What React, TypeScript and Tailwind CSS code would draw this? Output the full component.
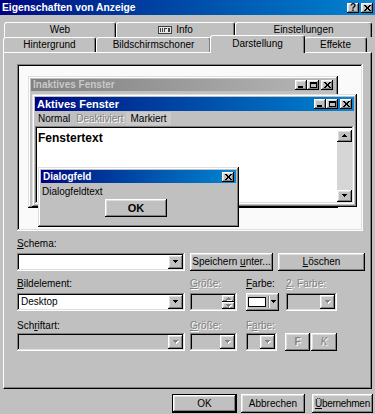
import React from 'react';

// classic 3D edges
const raised = 'shadow-[inset_-1px_-1px_#000000,inset_1px_1px_#ffffff,inset_-2px_-2px_#808080,inset_2px_2px_#dfdfdf]';
const sunken = 'shadow-[inset_-1px_-1px_#ffffff,inset_1px_1px_#808080,inset_-2px_-2px_#dfdfdf,inset_2px_2px_#000000]';
const frame = 'shadow-[inset_-1px_-1px_#000000,inset_1px_1px_#dfdfdf,inset_-2px_-2px_#808080,inset_2px_2px_#ffffff]';
const dim = 'text-[#808080] [text-shadow:1px_1px_0_#ffffff]';

const Tri: React.FC<{ up?: boolean; off?: boolean }> = ({ up, off }) => {
  const rows = up ? [1, 3, 5] : [5, 3, 1];
  return (
    <svg width="6" height="4" viewBox="0 0 6 4" shapeRendering="crispEdges">
      {off && rows.map((w, i) => <rect key={'s' + i} x={(5 - w) / 2 + 1} y={i + 1} width={w} height={1} fill="#ffffff" />)}
      {rows.map((w, i) => <rect key={i} x={(5 - w) / 2} y={i} width={w} height={1} fill={off ? '#808080' : '#000000'} />)}
    </svg>
  );
};

const Cap: React.FC<{ kind: 'min' | 'max' | 'close' | 'help' }> = ({ kind }) => (
  <div className={`w-[12px] h-[10px] bg-[#c0c0c0] ${raised} flex items-center justify-center`}>
    {kind === 'min' && <div className="w-[5px] h-[2px] bg-black mt-[4px] -ml-[1px]" />}
    {kind === 'max' && <div className="w-[7px] h-[6px] border border-black border-t-2" />}
    {kind === 'close' && (
      <svg width="7" height="6" viewBox="0 0 7 6" shapeRendering="crispEdges">
        <path d="M0 0h2l1.5 2 1.5-2h2L4.5 3 7 6H5L3.5 4 2 6H0l2.5-3z" fill="#000" />
      </svg>
    )}
    {kind === 'help' && <span className="text-[10px] font-bold leading-none">?</span>}
  </div>
);

const Btn: React.FC<{ className: string; children?: React.ReactNode }> = ({ className, children }) => (
  <div className={`${className} ${raised} bg-[#c0c0c0] flex items-center justify-center`}>{children}</div>
);

const Combo: React.FC<{ className: string; value?: string; off?: boolean }> = ({ className, value, off }) => (
  <div className={`${className} h-[18px] p-[2px] flex ${sunken} ${off ? 'bg-[#c0c0c0]' : 'bg-white'}`}>
    <div className="flex-1 flex items-center pl-[2px] overflow-hidden">{value}</div>
    <div className={`w-[15px] h-full ${raised} bg-[#c0c0c0] flex items-center justify-center`}>
      <Tri off={off} />
    </div>
  </div>
);

const Tab: React.FC<{ className: string; children: React.ReactNode }> = ({ className, children }) => (
  <div className={`${className} h-[15px] flex items-center justify-center gap-[4px] border-t border-l border-r border-t-white border-l-white border-r-black rounded-t-[3px] shadow-[inset_-1px_0_#808080]`}>
    {children}
  </div>
);

const InfoIcon = () => (
  <svg width="14" height="8" viewBox="0 0 14 8" shapeRendering="crispEdges">
    <rect x="0.5" y="0.5" width="13" height="7" fill="#e8e8e8" stroke="#404040" />
    <rect x="2" y="2" width="1" height="4" fill="#404040" />
    <rect x="4" y="2" width="1" height="4" fill="#404040" />
    <rect x="6" y="2" width="3" height="1" fill="#404040" />
    <rect x="6" y="3" width="1" height="3" fill="#404040" />
    <rect x="10" y="2" width="2" height="4" fill="#404040" />
  </svg>
);

const App: React.FC = () => {
  return (
    <div className="w-[375px] h-[414px] overflow-hidden bg-[#c0c0c0] text-black text-[10px] leading-[12px] font-['Liberation_Sans',Arial,sans-serif]">
      {/* title bar */}
      <div className="h-[15px] flex items-center pl-[2px] pr-[2px] bg-linear-to-r from-[#000080] to-[#1084d0]">
        <span className="text-white font-bold text-[10.3px]">Eigenschaften von Anzeige</span>
        <div className="ml-auto flex gap-[2px]">
          <Cap kind="help" />
          <Cap kind="close" />
        </div>
      </div>

      {/* tabs */}
      <div className="mt-[7px] ml-[4px] flex">
        <Tab className="w-[112px]">Web</Tab>
        <Tab className="w-[119px]"><InfoIcon /><span>Info</span></Tab>
        <Tab className="w-[137px]">Einstellungen</Tab>
      </div>
      <div className="ml-[3px] h-[15px] flex items-end">
        <Tab className="w-[93px]">Hintergrund</Tab>
        <Tab className="w-[115px]">Bildschirmschoner</Tab>
        <div className="relative z-10 -mx-[1px] -mb-[1px] w-[95px] h-[18px] pt-[2px] bg-[#c0c0c0] flex justify-center border-t border-l border-r border-t-white border-l-white border-r-black rounded-t-[3px] shadow-[inset_-1px_0_#808080]">
          Darstellung
        </div>
        <Tab className="w-[63px]">Effekte</Tab>
      </div>

      {/* panel */}
      <div className="ml-[3px] w-[369px] h-[337px] border border-t-white border-l-white border-r-black border-b-black shadow-[inset_-1px_-1px_#808080] pt-[11px] pl-[13px]">
        {/* preview */}
        <div className={`relative w-[346px] h-[167px] bg-[#fafafa] ${sunken}`}>
          <div className={`absolute left-[11px] top-[12px] w-[310px] h-[132px] bg-[#c0c0c0] p-[3px] ${frame}`}>
            <div className="h-[12px] flex items-center pl-[2px] pr-[2px] bg-linear-to-r from-[#808080] to-[#b8b8b8]">
              <span className="font-bold text-[#c8c8c8]">Inaktives Fenster</span>
              <div className="ml-auto flex">
                <Cap kind="min" />
                <Cap kind="max" />
                <div className="ml-[2px]"><Cap kind="close" /></div>
              </div>
            </div>
          </div>

          <div className={`absolute left-[15px] top-[30px] w-[325px] h-[113px] bg-[#c0c0c0] p-[3px] flex flex-col ${frame}`}>
            <div className="h-[14px] flex items-center pl-[2px] pr-[2px] bg-linear-to-r from-[#000080] to-[#1084d0]">
              <span className="font-bold text-white text-[11px]">Aktives Fenster</span>
              <div className="ml-auto flex">
                <Cap kind="min" />
                <Cap kind="max" />
                <div className="ml-[2px]"><Cap kind="close" /></div>
              </div>
            </div>
            <div className="h-[15px] flex items-center">
              <span className="px-[3px]">Normal</span>
              <span className={`px-[3px] ${dim}`}>Deaktiviert</span>
              <span className="px-[4px] h-[13px] flex items-center bg-[#cacaca]">Markiert</span>
            </div>
            <div className={`flex-1 flex p-[2px] bg-white ${sunken}`}>
              <div className="flex-1 pl-[1px] pt-[3px] font-bold text-[12px] leading-[14px]">Fenstertext</div>
              <div className="w-[15px] flex flex-col pt-[2px]">
                <Btn className="h-[12px]"><Tri up /></Btn>
                <div className="flex-1 bg-[#d6d6d6]" />
                <Btn className="h-[12px]"><Tri /></Btn>
              </div>
            </div>
          </div>

          <div className={`absolute left-[21px] top-[103px] w-[201px] h-[60px] bg-[#c0c0c0] p-[3px] ${frame}`}>
            <div className="h-[13px] flex items-center pl-[2px] pr-[2px] bg-linear-to-r from-[#000080] to-[#1084d0]">
              <span className="font-bold text-white">Dialogfeld</span>
              <div className="ml-auto"><Cap kind="close" /></div>
            </div>
            <div className="mt-[3px] pl-[1px] h-[12px]">Dialogfeldtext</div>
            <Btn className="mt-[1px] ml-[64px] w-[62px] h-[18px] font-bold text-[11px]">OK</Btn>
          </div>
        </div>

        {/* Schema */}
        <div className="mt-[7px] h-[12px]"><u>S</u>chema:</div>
        <div className="mt-[3px] flex h-[18px]">
          <Combo className="w-[168px]" />
          <Btn className="ml-[5px] w-[83px]"><span>Speichern <u>u</u>nter...</span></Btn>
          <Btn className="ml-[5px] w-[87px]"><span><u>L</u>öschen</span></Btn>
        </div>

        {/* Bildelement */}
        <div className="mt-[7px] h-[12px] flex">
          <div className="w-[173px]"><u>B</u>ildelement:</div>
          <div className={`w-[56px] ${dim}`}><u>G</u>röße:</div>
          <div className="w-[40px]"><u>F</u>arbe:</div>
          <div className={dim}><u>2</u>. Farbe:</div>
        </div>
        <div className="mt-[3px] flex h-[18px]">
          <Combo className="w-[168px]" value="Desktop" />
          <div className={`ml-[5px] w-[47px] h-[18px] p-[2px] flex justify-end ${sunken}`}>
            <div className="w-[13px] flex flex-col">
              <Btn className="h-[7px]"><Tri up off /></Btn>
              <Btn className="h-[7px]"><Tri off /></Btn>
            </div>
          </div>
          <Btn className="ml-[9px] w-[33px] h-[18px]">
            <div className="w-[18px] h-[10px] bg-white border border-black" />
            <div className="w-[1px] h-[12px] bg-[#808080] ml-[2px] shadow-[1px_0_#ffffff]" />
            <div className="ml-[2px]"><Tri /></div>
          </Btn>
          <Combo className="ml-[7px] w-[51px]" off />
        </div>

        {/* Schriftart */}
        <div className="mt-[9px] h-[12px] flex">
          <div className="w-[173px]">Sch<u>r</u>iftart:</div>
          <div className={`w-[56px] ${dim}`}><u>G</u>röße:</div>
          <div className={dim}>F<u>a</u>rbe:</div>
        </div>
        <div className="mt-[1px] flex h-[18px]">
          <Combo className="w-[168px]" off />
          <Combo className="ml-[5px] w-[47px]" off />
          <Combo className="ml-[9px] w-[31px]" off />
          <Btn className={`ml-[8px] w-[25px] font-bold ${dim}`}>F</Btn>
          <Btn className={`ml-[1px] w-[26px] italic ${dim}`}>K</Btn>
        </div>
      </div>

      {/* dialog buttons */}
      <div className="mt-[5px] flex h-[19px]">
        <div className="ml-[172px] w-[65px] border border-black flex">
          <Btn className="flex-1">OK</Btn>
        </div>
        <Btn className="ml-[4px] w-[64px]">Abbrechen</Btn>
        <Btn className="ml-[7px] w-[61px] tracking-[-0.3px]"><span><u>Ü</u>bernehmen</span></Btn>
      </div>
    </div>
  );
};

export default App;
